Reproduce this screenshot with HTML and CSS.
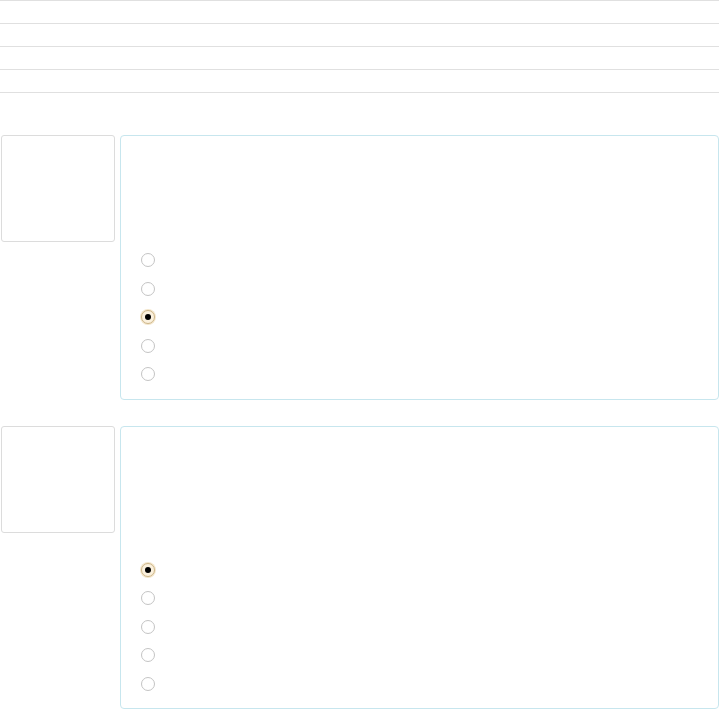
FILE: index.html
```html
<!DOCTYPE html>
<html lang="en">
<head>
    <meta charset="UTF-8">
    <meta name="viewport" content="width=device-width, initial-scale=1.0">
    <title>Quiz</title>
    <link rel="stylesheet" href="styles.css">
</head>
<body>
    <div class="top-list">
        <div class="top-row"></div>
        <div class="top-row"></div>
        <div class="top-row"></div>
        <div class="top-row"></div>
    </div>

    <div class="question">
        <div class="q-thumb"></div>
        <div class="q-card">
            <div class="q-text"></div>
            <div class="options">
                <label class="option"><span class="radio"></span></label>
                <label class="option"><span class="radio"></span></label>
                <label class="option"><span class="radio checked"></span></label>
                <label class="option"><span class="radio"></span></label>
                <label class="option"><span class="radio"></span></label>
            </div>
        </div>
    </div>

    <div class="question">
        <div class="q-thumb"></div>
        <div class="q-card">
            <div class="q-text q-text-tall"></div>
            <div class="options">
                <label class="option"><span class="radio checked"></span></label>
                <label class="option"><span class="radio"></span></label>
                <label class="option"><span class="radio"></span></label>
                <label class="option"><span class="radio"></span></label>
                <label class="option"><span class="radio"></span></label>
            </div>
        </div>
    </div>
</body>
</html>
```

FILE: styles.css
```css
body {
    margin: 0;
    padding: 0;
    background: #fff;
    font-family: "Liberation Sans", Arial, sans-serif;
    color: #333;
}
.top-list {
    border-top: 1px solid #e0e0e0;
}
.top-row {
    height: 22px;
    border-bottom: 1px solid #e0e0e0;
}
.question {
    display: flex;
    align-items: flex-start;
    gap: 5px;
    margin-top: 42px;
    padding-left: 1px;
}
.question + .question {
    margin-top: 26px;
}
.q-thumb {
    width: 112px;
    height: 105px;
    flex-shrink: 0;
    border: 1px solid #dcdcdc;
    border-radius: 3px;
}
.q-card {
    flex: 1;
    border: 1px solid #c7e6ee;
    border-radius: 4px;
    padding: 0 0 10px 20px;
}
.q-text {
    height: 110px;
}
.q-text-tall {
    height: 129px;
}
.options {
    display: flex;
    flex-direction: column;
}
.option {
    height: 28.5px;
    display: flex;
    align-items: center;
}
.radio {
    width: 12px;
    height: 12px;
    border: 1px solid #c4c4c4;
    border-radius: 50%;
    background: #fff;
    display: flex;
    align-items: center;
    justify-content: center;
}
.radio.checked {
    border-color: #cdb68a;
    background: #fbf1de;
    box-shadow: 0 0 0 1px #f3e6cc;
}
.radio.checked::after {
    content: "";
    width: 6px;
    height: 6px;
    border-radius: 50%;
    background: #000;
}
```
